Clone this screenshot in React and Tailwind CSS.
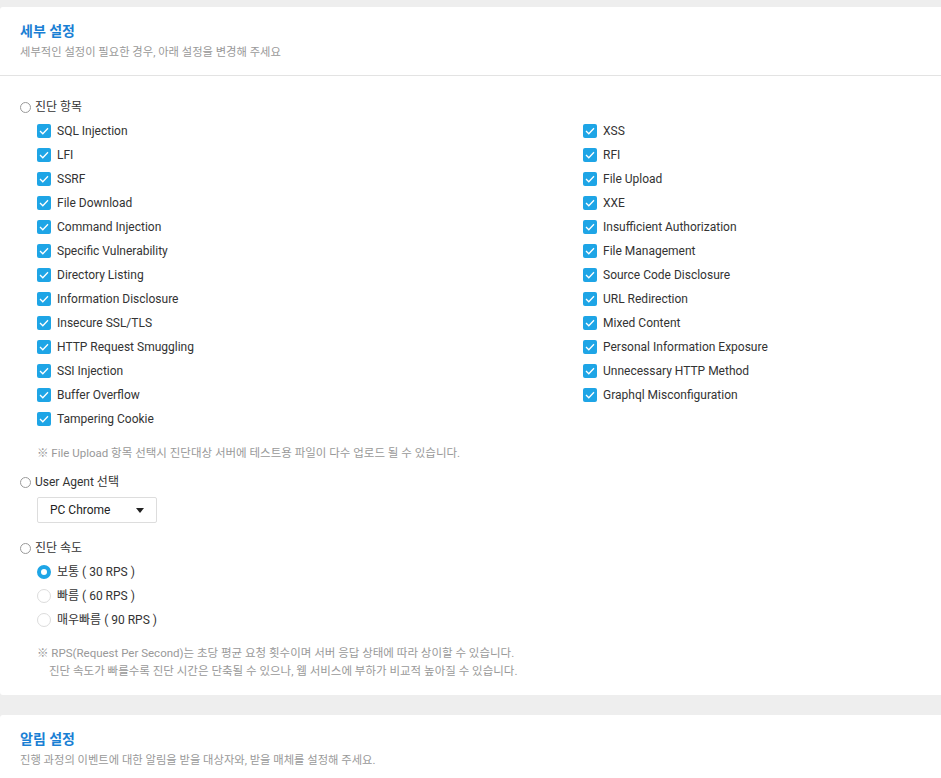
import React, { useState } from "react";

const LEFT_ITEMS = [
  "SQL Injection",
  "LFI",
  "SSRF",
  "File Download",
  "Command Injection",
  "Specific Vulnerability",
  "Directory Listing",
  "Information Disclosure",
  "Insecure SSL/TLS",
  "HTTP Request Smuggling",
  "SSI Injection",
  "Buffer Overflow",
  "Tampering Cookie",
];

const RIGHT_ITEMS = [
  "XSS",
  "RFI",
  "File Upload",
  "XXE",
  "Insufficient Authorization",
  "File Management",
  "Source Code Disclosure",
  "URL Redirection",
  "Mixed Content",
  "Personal Information Exposure",
  "Unnecessary HTTP Method",
  "Graphql Misconfiguration",
];

const SPEEDS = [
  { id: "normal", label: "보통 ( 30 RPS )" },
  { id: "fast", label: "빠름 ( 60 RPS )" },
  { id: "faster", label: "매우빠름 ( 90 RPS )" },
];

// small hollow circle in front of each group title
const GroupTitle = ({ children }) => (
  <div className="flex h-[24px] items-center">
    <span className="mr-[4px] h-[11px] w-[11px] rounded-full border border-[#9a9a9a]" />
    <span className="text-[12px] text-[#333]">{children}</span>
  </div>
);

const CheckItem = ({ label, checked, onToggle }) => (
  <label className="flex h-[24px] cursor-pointer items-center">
    <span
      onClick={onToggle}
      className={
        checked
          ? "flex h-[14px] w-[14px] items-center justify-center rounded-[2px] bg-[#1ea5e6]"
          : "flex h-[14px] w-[14px] items-center justify-center rounded-[2px] border border-[#ccc] bg-white"
      }
    >
      {checked && (
        <svg width="10" height="8" viewBox="0 0 10 8" fill="none">
          <path d="M1 4l2.8 2.8L9 1.2" stroke="white" strokeWidth="1.3" />
        </svg>
      )}
    </span>
    <span className="ml-[6px] text-[12px] text-[#333]">{label}</span>
  </label>
);

const SpeedRadio = ({ label, selected, onSelect }) => (
  <div className="flex h-[24px] cursor-pointer items-center" onClick={onSelect}>
    <span
      className={
        selected
          ? "h-[14px] w-[14px] rounded-full border-[4px] border-[#1ea5e6] bg-white"
          : "h-[14px] w-[14px] rounded-full border border-[#dcdcdc] bg-white"
      }
    />
    <span className="ml-[6px] text-[12px] text-[#333]">{label}</span>
  </div>
);

const SettingsCard = ({ title, desc, children }) => (
  <div className="w-[960px] rounded-[3px] bg-white">
    <div className="px-[20px] pt-[15px] pb-[14px]">
      <h2 className="text-[14px] leading-[18px] font-bold text-[#1a7fd4]">{title}</h2>
      <p className="mt-[5px] text-[11.3px] leading-[16px] text-[#999]">{desc}</p>
    </div>
    {children}
  </div>
);

export default function App() {
  const [checked, setChecked] = useState(() => {
    const all = {};
    [...LEFT_ITEMS, ...RIGHT_ITEMS].forEach((k) => (all[k] = true));
    return all;
  });
  const [speed, setSpeed] = useState("normal");

  const toggle = (k) => setChecked((prev) => ({ ...prev, [k]: !prev[k] }));

  return (
    <div
      className="min-h-screen overflow-hidden bg-[#eeeeee] pt-[7px]"
      style={{ fontFamily: 'Roboto, "Noto Sans CJK KR", sans-serif' }}
    >
      <SettingsCard title="세부 설정" desc="세부적인 설정이 필요한 경우, 아래 설정을 변경해 주세요">
        <div className="border-t border-[#e3e3e3] px-[20px] pt-[19px] pb-[15px]">
          <GroupTitle>진단 항목</GroupTitle>
          <div className="grid grid-cols-[546px_1fr] pl-[17px]">
            <div>
              {LEFT_ITEMS.map((k) => (
                <CheckItem key={k} label={k} checked={checked[k]} onToggle={() => toggle(k)} />
              ))}
            </div>
            <div>
              {RIGHT_ITEMS.map((k) => (
                <CheckItem key={k} label={k} checked={checked[k]} onToggle={() => toggle(k)} />
              ))}
            </div>
          </div>
          <p className="mt-[14px] pl-[17px] text-[11.5px] leading-[16px] text-[#999]">
            ※ File Upload 항목 선택시 진단대상 서버에 테스트용 파일이 다수 업로드 될 수 있습니다.
          </p>

          <div className="mt-[9px]">
            <GroupTitle>User Agent 선택</GroupTitle>
          </div>
          <div className="mt-[3px] ml-[17px] flex h-[26px] w-[120px] items-center justify-between rounded-[2px] border border-[#dddddd] pr-[12px] pl-[12px]">
            <span className="text-[12px] text-[#222]">PC Chrome</span>
            <svg width="8" height="5" viewBox="0 0 8 5">
              <path d="M0 0h8L4 5z" fill="#222" />
            </svg>
          </div>

          <div className="mt-[13px]">
            <GroupTitle>진단 속도</GroupTitle>
          </div>
          <div className="pl-[17px]">
            {SPEEDS.map((s) => (
              <SpeedRadio
                key={s.id}
                label={s.label}
                selected={speed === s.id}
                onSelect={() => setSpeed(s.id)}
              />
            ))}
          </div>
          <div className="mt-[12px] pl-[17px] text-[11.5px] leading-[18px] text-[#999]">
            <p>※ RPS(Request Per Second)는 초당 평균 요청 횟수이며 서버 응답 상태에 따라 상이할 수 있습니다.</p>
            <p className="pl-[12px]">
              진단 속도가 빠를수록 진단 시간은 단축될 수 있으나, 웹 서비스에 부하가 비교적 높아질 수 있습니다.
            </p>
          </div>
        </div>
      </SettingsCard>

      <div className="mt-[20px]">
        <SettingsCard
          title="알림 설정"
          desc="진행 과정의 이벤트에 대한 알림을 받을 대상자와, 받을 매체를 설정해 주세요."
        />
      </div>
    </div>
  );
}
